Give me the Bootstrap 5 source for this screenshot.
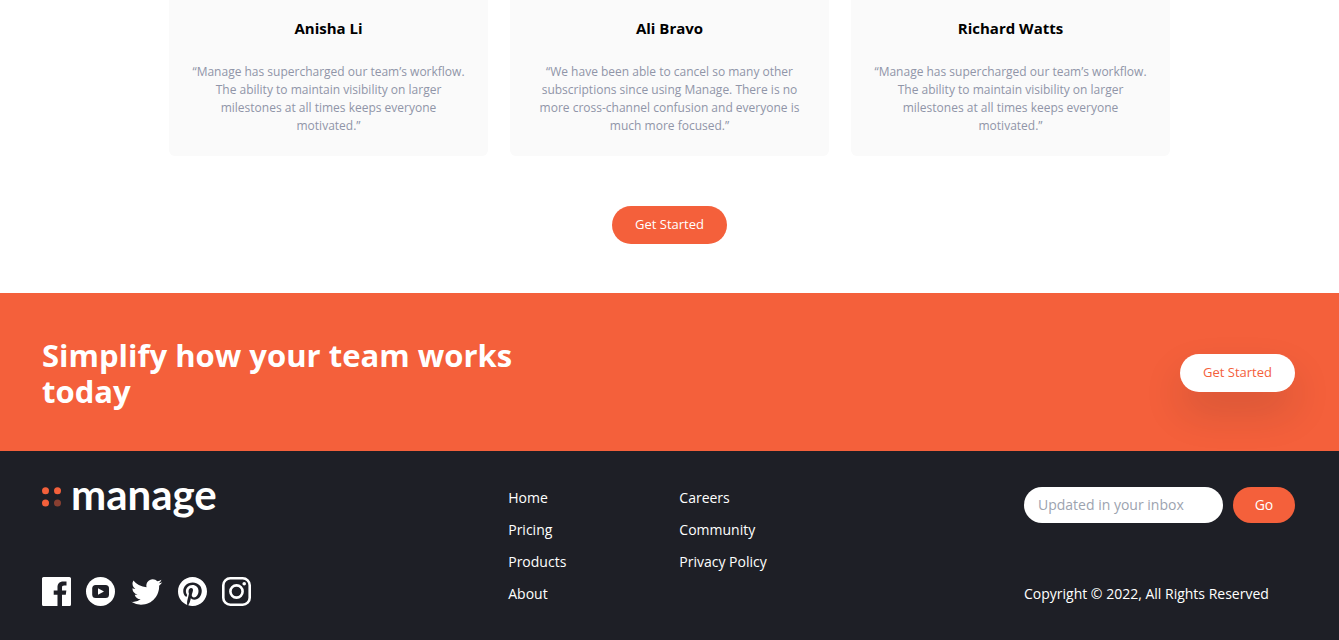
<!DOCTYPE html>
<html lang="en">
<head>
<meta charset="utf-8">
<meta name="viewport" content="width=device-width, initial-scale=1">
<title>Manage</title>
<link href="https://cdn.jsdelivr.net/npm/bootstrap@5.3.0/dist/css/bootstrap.min.css" rel="stylesheet">
<style>
  :root { --brand: #f4603b; --ink: #1e1f26; --muted: #9095a8; }
  body { font-family: "Open Sans", "Noto Sans", sans-serif; font-size: 14px; line-height: 18px; color: #000; }
  .quotes { max-width: 1001px; gap: 22px; }
  .quote { flex: 1 1 0; background: #fafafa; border-radius: 0 0 6px 6px; padding: 16px 22px 21px; }
  .quote h2 { font-size: 15px; line-height: 24px; margin-bottom: 23px; }
  .quote p { font-size: 12px; line-height: 18px; color: var(--muted); }
  .pill { font-size: 13px; line-height: 18px; padding: 8px 20px 10px; border: 1px solid transparent; min-width: 115px; }
  .pill-brand { background: var(--brand); color: #fff; }
  .pill-brand:hover { background: #ff8b6d; color: #fff; }
  .pill-light { background: #fff; color: var(--brand); box-shadow: 0 20px 40px rgba(30, 31, 38, .14); }
  .pill-light:hover { background: #fff; color: #ff8b6d; }
  .start { padding: 50px 0 49px; }
  .cta { background: var(--brand); padding: 44px 44px 42px 42px; }
  .cta h2 { font-size: 31px; line-height: 36px; max-width: 500px; }
  .site-footer { background: var(--ink); color: #fff; padding: 36px 44px 34px 42px; }
  .site-footer a { color: #fff; text-decoration: none; }
  .site-footer a:hover { color: var(--brand); }
  .logo { gap: 10px; }
  .logo-name { font-family: Lato, sans-serif; font-size: 42px; line-height: 14px; font-weight: 700; }
  .social { gap: 15px; }
  .social svg, .logo svg { display: block; fill: currentColor; }
  .links { gap: 113px; padding: 2px 0 3px; }
  .links ul { gap: 14px; }
  .signup { width: 271px; padding-bottom: 3px; }
  .signup form { gap: 10px; }
  .signup input { font-size: 14px; line-height: 20px; padding: 8px 14px; border: 0; min-width: 0; }
  .signup input::placeholder { color: #9ca3af; }
  .signup .pill { font-size: 14px; min-width: 62px; padding: 8px 20px; }
</style>
</head>
<body>
<main>
  <section class="quotes d-flex mx-auto text-center" aria-label="Testimonials">
    <article class="quote">
      <h2 class="fw-bold">Anisha Li</h2>
      <p class="mb-0">“Manage has supercharged our team’s workflow. The ability to maintain visibility on larger milestones at all times keeps everyone motivated.”</p>
    </article>
    <article class="quote">
      <h2 class="fw-bold">Ali Bravo</h2>
      <p class="mb-0">“We have been able to cancel so many other subscriptions since using Manage. There is no more cross-channel confusion and everyone is much more focused.”</p>
    </article>
    <article class="quote">
      <h2 class="fw-bold">Richard Watts</h2>
      <p class="mb-0">“Manage has supercharged our team’s workflow. The ability to maintain visibility on larger milestones at all times keeps everyone motivated.”</p>
    </article>
  </section>
  <div class="start d-flex justify-content-center">
    <button type="button" class="btn rounded-pill pill pill-brand">Get Started</button>
  </div>
  <section class="cta d-flex align-items-center justify-content-between">
    <h2 class="fw-bold text-white mb-0">Simplify how your team works today</h2>
    <button type="button" class="btn rounded-pill pill pill-light">Get Started</button>
  </section>
</main>
<footer class="site-footer d-flex justify-content-between">
  <div class="d-flex flex-column justify-content-between">
    <a href="#" class="logo d-flex align-items-start" aria-label="manage">
      <svg width="19" height="20" viewBox="0 0 19 20" aria-hidden="true">
        <g fill="#f4603b"><circle cx="3.5" cy="3.8" r="3.5"/><circle cx="15.5" cy="3.8" r="3.5"/><circle cx="3.5" cy="16" r="3.5"/><circle cx="15.5" cy="16" r="3.5" opacity=".5"/></g>
      </svg>
      <span class="logo-name">manage</span>
    </a>
    <div class="social d-flex align-items-center">
      <a href="#" aria-label="Facebook"><svg width="29" height="29" viewBox="0 0 20 20"><path d="M18.896 0H1.104C.494 0 0 .494 0 1.104v17.793C0 19.506.494 20 1.104 20h9.58v-7.745H8.076V9.237h2.606V7.01c0-2.583 1.578-3.99 3.883-3.99 1.104 0 2.052.082 2.329.119v2.7h-1.598c-1.254 0-1.496.597-1.496 1.47v1.928h2.989l-.39 3.018h-2.6V20h5.098c.608 0 1.102-.494 1.102-1.104V1.104C20 .494 19.506 0 18.896 0z"/></svg></a>
      <a href="#" aria-label="YouTube"><svg width="29" height="29" viewBox="0 0 29 29"><circle cx="14.5" cy="14.5" r="14.5"/><rect x="6.2" y="8" width="16.8" height="13" rx="3.5" fill="#1e1f26"/><path d="M12 11.3v6.4l6-3.2z"/></svg></a>
      <a href="#" aria-label="Twitter"><svg width="33" height="28" viewBox="0 0 21 18"><path d="M20.667 2.797a8.192 8.192 0 01-2.357.646 4.11 4.11 0 001.804-2.27 8.22 8.22 0 01-2.606.996A4.096 4.096 0 0014.513.873c-2.649 0-4.595 2.472-3.997 5.038a11.648 11.648 0 01-8.457-4.287 4.109 4.109 0 001.27 5.478A4.086 4.086 0 011.47 6.59c-.045 1.901 1.317 3.68 3.29 4.075a4.113 4.113 0 01-1.853.07 4.106 4.106 0 003.834 2.85 8.25 8.25 0 01-6.075 1.7 11.616 11.616 0 006.29 1.843c7.618 0 11.922-6.434 11.662-12.205a8.354 8.354 0 002.048-2.124z"/></svg></a>
      <a href="#" aria-label="Pinterest"><svg width="29" height="29" viewBox="0 0 20 20"><path d="M10 0C4.478 0 0 4.477 0 10c0 4.237 2.636 7.855 6.356 9.312-.087-.791-.166-2.005.035-2.868.182-.78 1.173-4.971 1.173-4.971s-.299-.599-.299-1.484c0-1.39.806-2.429 1.81-2.429.853 0 1.265.641 1.265 1.409 0 .858-.546 2.141-.828 3.329-.236.996.499 1.807 1.481 1.807 1.777 0 3.144-1.874 3.144-4.579 0-2.394-1.72-4.068-4.177-4.068-2.845 0-4.515 2.134-4.515 4.34 0 .859.331 1.781.744 2.282a.3.3 0 01.069.287c-.076.316-.245.995-.278 1.134-.044.183-.145.222-.335.134-1.249-.581-2.03-2.407-2.03-3.874 0-3.154 2.292-6.051 6.607-6.051 3.469 0 6.165 2.472 6.165 5.776 0 3.447-2.173 6.22-5.19 6.22-1.013 0-1.966-.527-2.292-1.148l-.623 2.377c-.226.869-.835 1.958-1.243 2.622.936.289 1.93.445 2.961.445 5.523 0 10-4.477 10-10S15.523 0 10 0z"/></svg></a>
      <a href="#" aria-label="Instagram"><svg width="29" height="29" viewBox="0 0 29 29"><g style="fill:none" stroke="currentColor" stroke-width="2.6"><rect x="1.3" y="1.3" width="26.4" height="26.4" rx="7"/><circle cx="14.5" cy="14.5" r="6.1"/></g><circle cx="22.2" cy="6.8" r="1.8"/></svg></a>
    </div>
  </div>
  <nav class="links d-flex" aria-label="Footer">
    <ul class="list-unstyled d-flex flex-column mb-0">
      <li><a href="#">Home</a></li>
      <li><a href="#">Pricing</a></li>
      <li><a href="#">Products</a></li>
      <li><a href="#">About</a></li>
    </ul>
    <ul class="list-unstyled d-flex flex-column mb-0">
      <li><a href="#">Careers</a></li>
      <li><a href="#">Community</a></li>
      <li><a href="#">Privacy Policy</a></li>
    </ul>
  </nav>
  <div class="signup d-flex flex-column justify-content-between">
    <form class="d-flex">
      <input type="text" class="form-control rounded-pill" placeholder="Updated in your inbox" aria-label="Email address">
      <button type="button" class="btn rounded-pill pill pill-brand">Go</button>
    </form>
    <p class="mb-0">Copyright © 2022, All Rights Reserved</p>
  </div>
</footer>
<script src="https://cdn.jsdelivr.net/npm/bootstrap@5.3.0/dist/js/bootstrap.bundle.min.js"></script>
</body>
</html>
